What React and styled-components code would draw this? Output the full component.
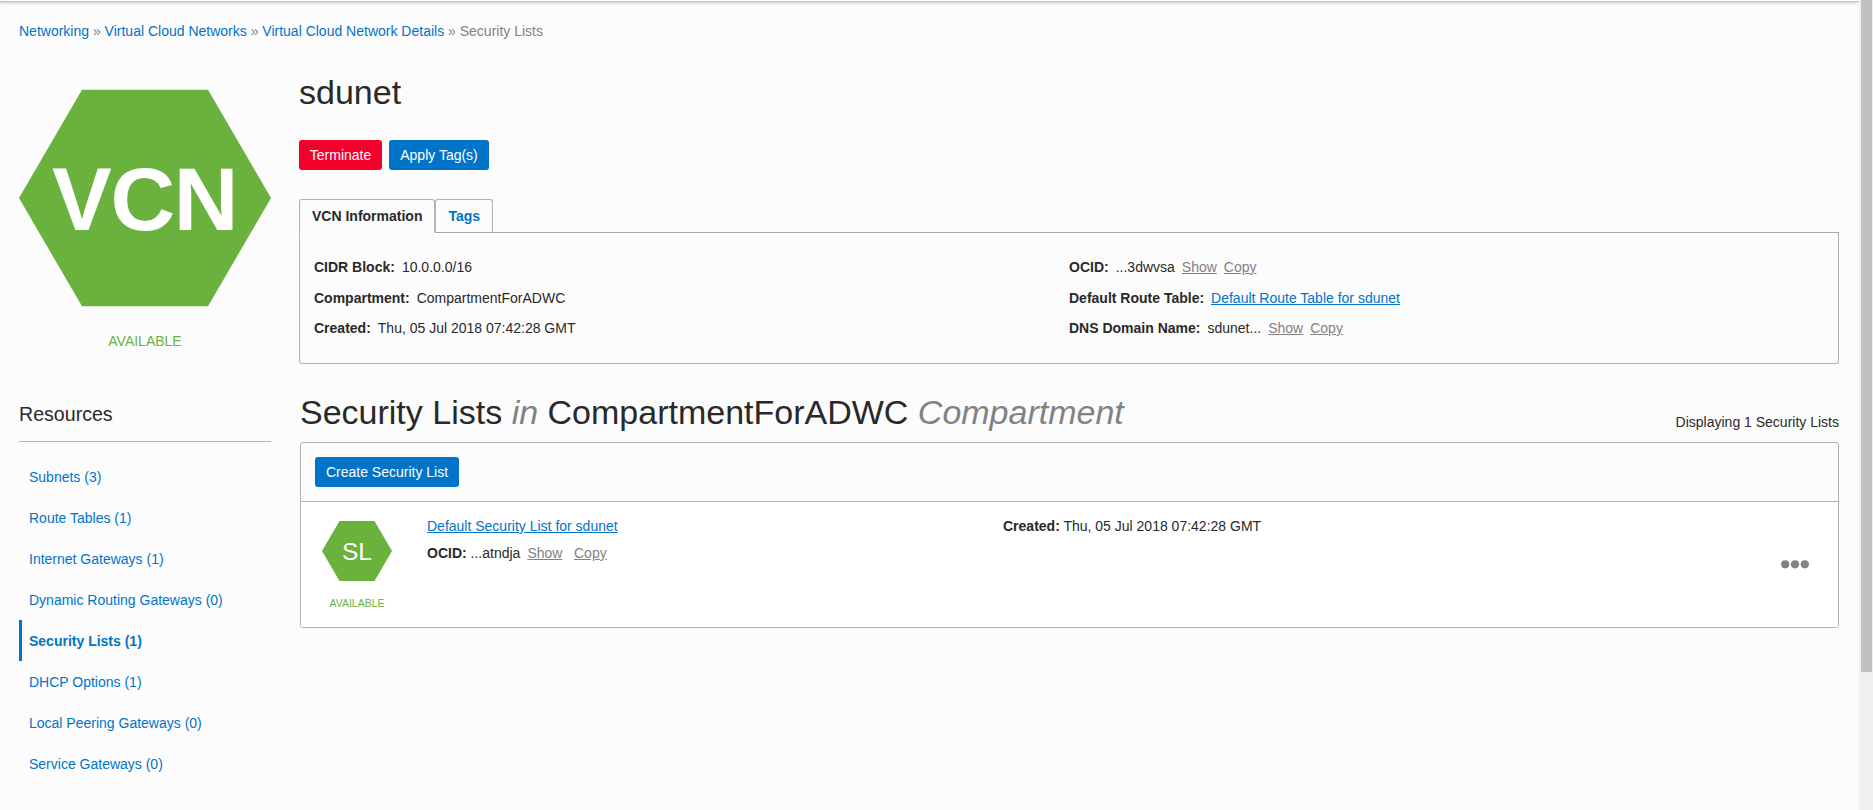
import React from "react";
import styled, { createGlobalStyle } from "styled-components";

const GlobalStyle = createGlobalStyle`
  *, *::before, *::after { box-sizing: border-box; }
  body {
    margin: 0;
    background: #fcfcfc;
    color: #292929;
    font: 14px/20px "Liberation Sans", Arial, sans-serif;
  }
  h1, h2, h3, ul, dl, dd, p { margin: 0; padding: 0; font-weight: normal; }
`;

const blue = "#0074c9";
const line = "#aeb3b9";

const Page = styled.div`
  display: flex;
  height: 810px;
  overflow: hidden;
`;

const Content = styled.div`
  flex: 1;
  min-width: 0;
`;

const ScrollTrack = styled.div`
  width: 14px;
  padding: 0 1px 0 2px;
  background: #f0f0f0;
`;

const ScrollThumb = styled.div`
  height: 672px;
  background: #c1c1c1;
`;

const HeaderEdge = styled.div`
  height: 2px;
  background: #fcfcfc;
  border-bottom: 1px solid #c0c6c3;
  box-shadow: 0 1px 3px rgba(0, 0, 0, 0.25);
`;

const Breadcrumb = styled.nav`
  padding: 19px 19px 0;
  color: #828282;
`;

const Link = styled.a`
  color: ${(p) => (p.$muted ? "#828282" : blue)};
  text-decoration: ${(p) => (p.$plain ? "none" : "underline")};
  margin-left: ${(p) => p.$gap || 0}px;
`;

const Columns = styled.div`
  display: flex;
  gap: 28px;
  padding: 0 20px 0 19px;
`;

const Sidebar = styled.aside`
  width: 252px;
  padding-top: 48px;
`;

const Main = styled.main`
  flex: 1;
  min-width: 0;
  padding-top: 31px;
`;

const HexSvg = styled.svg`
  display: block;
  fill: #6ab23d;
  text {
    fill: #fff;
    font-family: "Liberation Sans", Arial, sans-serif;
    text-anchor: middle;
  }
`;

const Status = styled.div`
  color: #6ab23d;
  text-align: center;
  font-size: ${(p) => (p.$small ? "10.5px" : "14px")};
  line-height: ${(p) => (p.$small ? 14 : 20)}px;
  margin-top: ${(p) => (p.$small ? 15 : 24)}px;
`;

const ResourcesTitle = styled.h3`
  margin-top: 48px;
  height: 43px;
  font-size: 19.6px;
  line-height: 30px;
  border-bottom: 1px solid #b3b3b3;
`;

const ResourceList = styled.ul`
  list-style: none;
  margin-top: 14px;
`;

const ResourceItem = styled.li`
  height: 41px;
  line-height: 43px;
  padding-left: 7px;
  border-left: 3px solid ${(p) => (p.$active ? blue : "transparent")};
  font-weight: ${(p) => (p.$active ? "bold" : "normal")};
`;

const Title = styled.h1`
  font-size: 34px;
  line-height: 40px;
`;

const Actions = styled.div`
  display: flex;
  gap: 7px;
  margin-top: 28px;
`;

const Button = styled.button`
  width: ${(p) => p.$width}px;
  height: 30px;
  padding: 0;
  border: 0;
  border-radius: 3px;
  background: ${(p) => (p.$danger ? "#f5002d" : "#0074c9")};
  color: #fff;
  font: inherit;
`;

const Tabs = styled.div`
  display: flex;
  margin: 29px 0 -1px;
`;

const Tab = styled.div`
  width: ${(p) => p.$width}px;
  height: 34px;
  padding-left: ${(p) => (p.$active ? 12 : 12.5)}px;
  line-height: 32px;
  font-weight: bold;
  color: ${(p) => (p.$active ? "inherit" : blue)};
  border: 1px solid ${line};
  border-bottom-color: ${(p) => (p.$active ? "#fcfcfc" : "#a8a8a8")};
  border-radius: 3px 3px 0 0;
  background: #fcfcfc;
  position: relative;
`;

const InfoPanel = styled.section`
  display: grid;
  grid-template-columns: 755px 1fr;
  height: 132px;
  padding: 24px 14px 0;
  border: 1px solid ${line};
  border-top-color: #a8a8a8;
  border-radius: 0 0 3px 3px;
`;

const InfoColumn = styled.div`
  display: flex;
  flex-direction: column;
`;

const Field = styled.div`
  height: 30.5px;
  b { margin-right: 7px; }
`;

const ListHeading = styled.div`
  display: flex;
  justify-content: space-between;
  align-items: flex-start;
  margin: 28px 0 0 1px;
  height: 50px;
`;

const ListTitle = styled.h2`
  font-size: 34px;
  line-height: 40px;
  em { color: #828282; }
`;

const Count = styled.span`
  padding-top: 20px;
`;

const ListPanel = styled.section`
  margin-left: 1px;
  border: 1px solid ${line};
  border-radius: 3px;
  overflow: hidden;
`;

const Toolbar = styled.div`
  height: 59px;
  padding: 14px;
  border-bottom: 1px solid ${line};
`;

const Row = styled.div`
  display: flex;
  height: 125px;
  padding: 19px 29px 0 21px;
  background: #fff;
`;

const RowIcon = styled.div`
  width: 70px;
  margin-right: 35px;
`;

const RowDetails = styled.div`
  width: 576px;
  margin-top: -5px;
`;

const RowLine = styled.div`
  height: 27px;
`;

const Menu = styled.div`
  margin: 39px 0 0 auto;
  svg { display: block; fill: #828282; }
`;

const resources = [
  "Subnets (3)",
  "Route Tables (1)",
  "Internet Gateways (1)",
  "Dynamic Routing Gateways (0)",
  "Security Lists (1)",
  "DHCP Options (1)",
  "Local Peering Gateways (0)",
  "Service Gateways (0)",
];

export default function App() {
  return (
    <>
      <GlobalStyle />
      <Page>
        <Content>
          <HeaderEdge />
          <Breadcrumb>
            <Link $plain>Networking</Link> » <Link $plain>Virtual Cloud Networks</Link> »{" "}
            <Link $plain>Virtual Cloud Network Details</Link> » Security Lists
          </Breadcrumb>
          <Columns>
            <Sidebar>
              <HexSvg width="252" height="218" viewBox="0 0 252 218">
                <polygon points="0,109 63,0.8 189,0.8 252,109 189,217.3 63,217.3" />
                <text x="125.6" y="141" fontSize="89.6" fontWeight="bold" letterSpacing="-1.4">VCN</text>
              </HexSvg>
              <Status>AVAILABLE</Status>
              <ResourcesTitle>Resources</ResourcesTitle>
              <ResourceList>
                {resources.map((name) => (
                  <ResourceItem key={name} $active={name.startsWith("Security")}>
                    <Link $plain>{name}</Link>
                  </ResourceItem>
                ))}
              </ResourceList>
            </Sidebar>
            <Main>
              <Title>sdunet</Title>
              <Actions>
                <Button $danger $width={83}>Terminate</Button>
                <Button $width={100}>Apply Tag(s)</Button>
              </Actions>
              <Tabs>
                <Tab $active $width={136}>VCN Information</Tab>
                <Tab $width={58}>Tags</Tab>
              </Tabs>
              <InfoPanel>
                <InfoColumn>
                  <Field><b>CIDR Block:</b>10.0.0.0/16</Field>
                  <Field><b>Compartment:</b>CompartmentForADWC</Field>
                  <Field><b>Created:</b>Thu, 05 Jul 2018 07:42:28 GMT</Field>
                </InfoColumn>
                <InfoColumn>
                  <Field>
                    <b>OCID:</b>...3dwvsa
                    <Link $muted $gap={7}>Show</Link>
                    <Link $muted $gap={7}>Copy</Link>
                  </Field>
                  <Field><b>Default Route Table:</b><Link>Default Route Table for sdunet</Link></Field>
                  <Field>
                    <b>DNS Domain Name:</b>sdunet...
                    <Link $muted $gap={7}>Show</Link>
                    <Link $muted $gap={7}>Copy</Link>
                  </Field>
                </InfoColumn>
              </InfoPanel>
              <ListHeading>
                <ListTitle>
                  Security Lists <em>in</em> CompartmentForADWC <em>Compartment</em>
                </ListTitle>
                <Count>Displaying 1 Security Lists</Count>
              </ListHeading>
              <ListPanel>
                <Toolbar>
                  <Button $width={144}>Create Security List</Button>
                </Toolbar>
                <Row>
                  <RowIcon>
                    <HexSvg width="70" height="60" viewBox="0 0 70 60">
                      <polygon points="0,30 17.5,0 52.5,0 70,30 52.5,60 17.5,60" />
                      <text x="35" y="39" fontSize="24.5">SL</text>
                    </HexSvg>
                    <Status $small>AVAILABLE</Status>
                  </RowIcon>
                  <RowDetails>
                    <RowLine><Link>Default Security List for sdunet</Link></RowLine>
                    <RowLine>
                      <b>OCID:</b> ...atndja
                      <Link $muted $gap={7}>Show</Link>
                      <Link $muted $gap={11.6}>Copy</Link>
                    </RowLine>
                  </RowDetails>
                  <RowDetails>
                    <RowLine><b>Created:</b> Thu, 05 Jul 2018 07:42:28 GMT</RowLine>
                  </RowDetails>
                  <Menu>
                    <svg width="28" height="9" viewBox="0 0 28 9">
                      <circle cx="4.2" cy="4.3" r="4.1" />
                      <circle cx="14" cy="4.3" r="4.1" />
                      <circle cx="23.8" cy="4.3" r="4.1" />
                    </svg>
                  </Menu>
                </Row>
              </ListPanel>
            </Main>
          </Columns>
        </Content>
        <ScrollTrack>
          <ScrollThumb />
        </ScrollTrack>
      </Page>
    </>
  );
}
